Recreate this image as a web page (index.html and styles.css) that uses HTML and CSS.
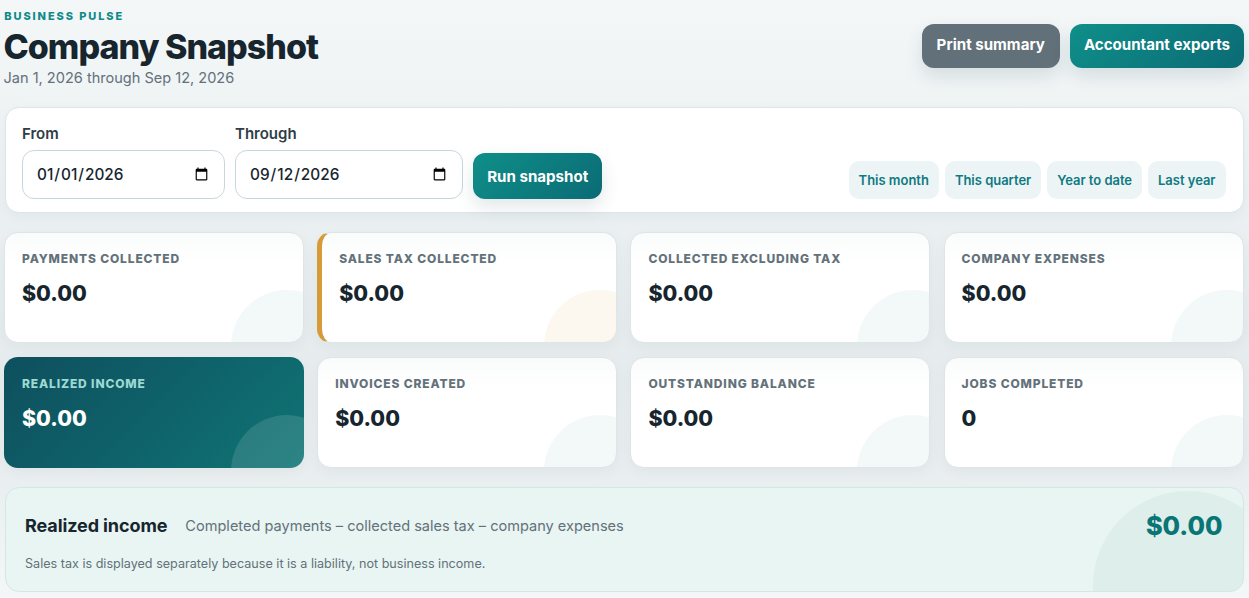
FILE: index.html
```html
<!DOCTYPE html>
<html lang="en">
<head>
<meta charset="utf-8">
<title>Company Snapshot</title>
<link rel="stylesheet" href="styles.css">
</head>
<body>
<main class="page">
  <header class="head">
    <div>
      <div class="eyebrow">BUSINESS PULSE</div>
      <h1 class="title">Company Snapshot</h1>
      <div class="range">Jan 1, 2026 through Sep 12, 2026</div>
    </div>
    <div class="actions">
      <a class="btn btn-grey">Print summary</a>
      <a class="btn btn-teal">Accountant exports</a>
    </div>
  </header>
  <section class="filter">
    <div class="filter-left">
      <label class="field"><span class="field-label">From</span><input class="date" type="date" value="2026-01-01"></label>
      <label class="field"><span class="field-label">Through</span><input class="date" type="date" value="2026-09-12"></label>
      <button class="btn btn-teal run">Run snapshot</button>
    </div>
    <div class="presets">
      <a class="preset">This month</a>
      <a class="preset">This quarter</a>
      <a class="preset">Year to date</a>
      <a class="preset">Last year</a>
    </div>
  </section>
  <section class="cards">
    <div class="card"><div class="card-label">PAYMENTS COLLECTED</div><div class="card-value">$0.00</div></div>
    <div class="card card-tax"><div class="card-label">SALES TAX COLLECTED</div><div class="card-value">$0.00</div></div>
    <div class="card"><div class="card-label">COLLECTED EXCLUDING TAX</div><div class="card-value">$0.00</div></div>
    <div class="card"><div class="card-label">COMPANY EXPENSES</div><div class="card-value">$0.00</div></div>
    <div class="card card-dark"><div class="card-label">REALIZED INCOME</div><div class="card-value">$0.00</div></div>
    <div class="card"><div class="card-label">INVOICES CREATED</div><div class="card-value">$0.00</div></div>
    <div class="card"><div class="card-label">OUTSTANDING BALANCE</div><div class="card-value">$0.00</div></div>
    <div class="card"><div class="card-label">JOBS COMPLETED</div><div class="card-value">0</div></div>
  </section>
  <section class="summary">
    <div class="summary-top">
      <div class="summary-line"><strong class="summary-title">Realized income</strong><span class="summary-formula">Completed payments – collected sales tax – company expenses</span></div>
      <div class="summary-value">$0.00</div>
    </div>
    <div class="summary-note">Sales tax is displayed separately because it is a liability, not business income.</div>
  </section>
</main>
</body>
</html>
```
FILE: styles.css
```css
* { box-sizing: border-box; }
html, body { margin: 0; padding: 0; height: 100%; overflow: hidden; }
body {
  font-family: Inter, "Liberation Sans", sans-serif;
  color: #17252e;
  background: linear-gradient(180deg, #f3f7f8 0%, #e6ecee 55%, #e8edef 78%, #f3f7f7 100%);
}
.page { padding: 10px 0 0 4.5px; width: 1243.5px; }
.head { display: flex; justify-content: space-between; align-items: flex-start; height: 97.3px; margin-left: -1px; margin-right: -.5px; }
.eyebrow { margin-left: .8px; font-size: 11px; line-height: 13px; font-weight: 800; letter-spacing: 1.9px; color: #0f8a88; }
.title { margin: 3px 0 0; font-size: 34px; line-height: 41px; font-weight: 800; letter-spacing: -.98px; color: #17252e; }
.range { margin-top: 3px; font-size: 14.56px; line-height: 17px; color: #63717a; }
.actions { display: flex; gap: 10px; margin-top: 14px; }
.btn {
  display: flex; align-items: center; justify-content: center;
  height: 44px; padding: 0 14px 4px; border: 0; border-radius: 12px;
  font: 700 15.1px Inter, sans-serif; color: #fff;
  box-shadow: 0 8px 18px rgba(20, 60, 70, .12);
}
.btn-grey { background: #617079; padding: 0 15px 4px; }
.btn-teal { background: linear-gradient(135deg, #0f8f89, #0b6b75); }
.filter {
  display: flex; justify-content: space-between; align-items: flex-end;
  height: 106.2px; padding: 0 17px 13px 16.5px; background: #fff;
  border: 1px solid #dde5e8; border-radius: 14px;
  box-shadow: 0 4px 14px rgba(20, 50, 60, .04);
}
.filter-left { display: flex; align-items: flex-end; gap: 10px; }
.field { display: flex; flex-direction: column; gap: 7px; }
.field-label { font-size: 15px; line-height: 18px; font-weight: 600; color: #2f3d46; }
.date {
  width: 203px; height: 49px; padding: 0 13px; background: #fff;
  border: 1px solid #c9d6dc; border-radius: 12px;
  font: 500 15.36px Inter, sans-serif; color: #17252e;
}
.field:nth-child(2) .date { width: 228px; }
.run { height: 46px; padding: 0 14.2px; }
.presets { display: flex; gap: 6px; }
.preset {
  display: flex; align-items: center; height: 38px; padding: 0 10px;
  background: #edf4f5; border-radius: 10px;
  font-size: 12.96px; font-weight: 600; color: #0e7a82;
}
.cards { display: grid; grid-template-columns: repeat(4, 300px); grid-auto-rows: 111.5px; column-gap: 13.2px; row-gap: 13.5px; margin: 18.5px 0 0 -.5px; }
.card {
  position: relative; overflow: hidden; padding: 18.5px 17px;
  background: linear-gradient(180deg, #fafbfb 0, #fff 30px);
  border: 1px solid #dde5e8; border-radius: 14px;
  box-shadow: 0 4px 14px rgba(20, 50, 60, .04);
}
.card::after {
  content: ""; position: absolute; right: -40px; bottom: -60px;
  width: 112px; height: 112px; border-radius: 50%;
  background: rgba(15, 120, 125, .05);
}
.card-label { font-size: 12px; line-height: 15px; font-weight: 800; letter-spacing: .85px; color: #63717a; }
.card-value { margin-top: 14px; font-size: 21.4px; line-height: 27px; font-weight: 800; color: #17252e; }
.card-tax { border-left: 5px solid #d69a38; }
.card-tax::after { background: rgba(214, 154, 56, .08); }
.card-dark { background: linear-gradient(135deg, #0e4f5e, #0f7474); border: 0; padding: 19.5px 18px; }
.card-dark::after { background: rgba(255, 255, 255, .12); right: -39px; bottom: -59px; }
.card-dark .card-label { color: #9cd9d2; }
.card-dark .card-value { color: #fff; }
.summary {
  position: relative; overflow: hidden; height: 104.5px; margin-top: 19px;
  padding: 22.4px 20px 0 19.5px; background: #e8f5f2;
  border: 1px solid #d3e8e5; border-radius: 14px;
}
.summary::after {
  content: ""; position: absolute; right: -40px; bottom: -90px;
  width: 190px; height: 190px; border-radius: 50%;
  background: rgba(15, 120, 125, .05);
}
.summary-top { display: flex; justify-content: space-between; align-items: center; position: relative; z-index: 1; }
.summary-line { display: flex; align-items: center; gap: 18px; }
.summary-title { font-size: 18px; line-height: 26px; font-weight: 700; color: #17252e; letter-spacing: -.1px; }
.summary-formula { font-size: 14.56px; color: #63717a; }
.summary-value { font-size: 25.3px; line-height: 30px; font-weight: 800; color: #0a7575; }
.summary-note { margin-top: 15px; font-size: 12.6px; line-height: 15px; color: #63717a; position: relative; z-index: 1; }
```
